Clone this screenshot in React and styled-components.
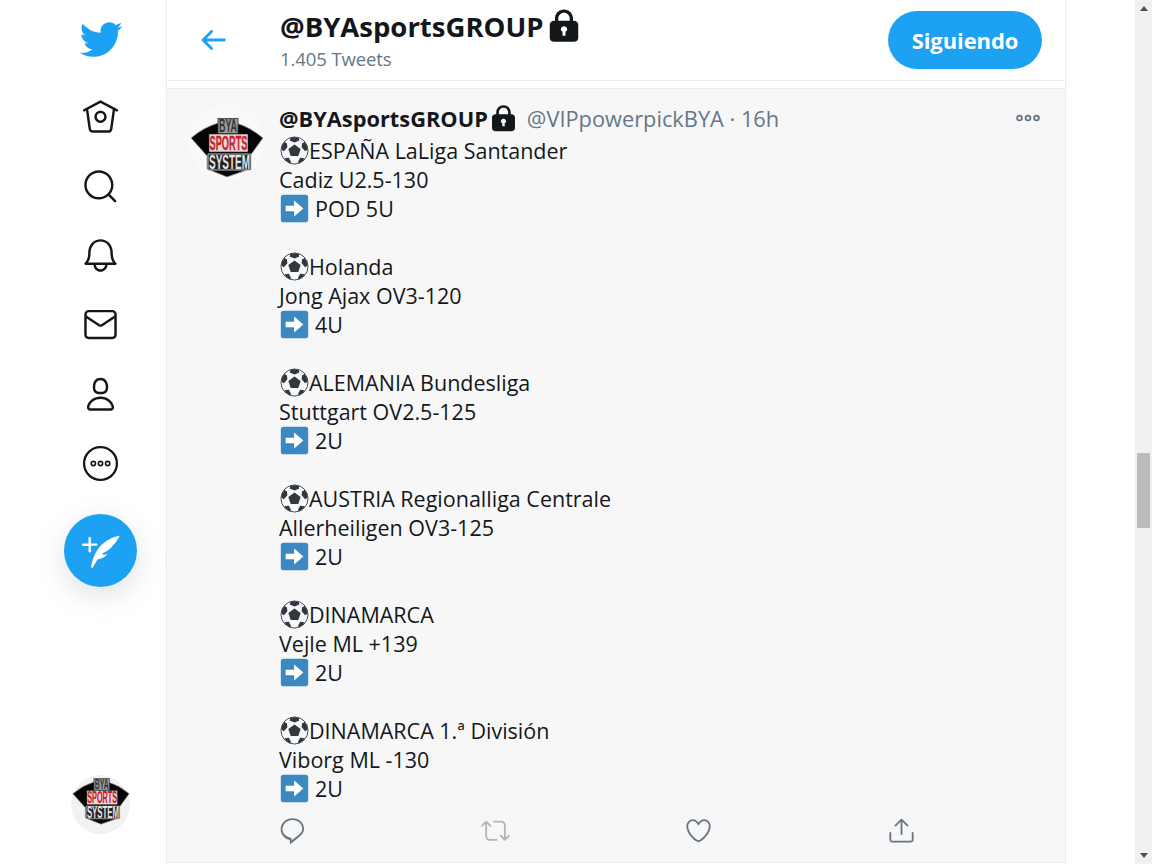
import React from "react";
import styled, { createGlobalStyle } from "styled-components";

const Global = createGlobalStyle`
  html, body { margin: 0; height: 100%; overflow: hidden; background: #fff; }
  body { font-family: "Open Sans", "Liberation Sans", sans-serif; color: #14171a; }
  #root { height: 100%; }
`;

const Page = styled.div`
  display: flex;
  width: 1152px;
  height: 864px;
  overflow: hidden;
`;
const Sidebar = styled.nav`
  width: 166px;
  height: 864px;
  flex: none;
  display: flex;
  flex-direction: column;
  align-items: center;
  padding: 0 0 0 35px;
  box-sizing: border-box;
`;
const Logo = styled.div`
  height: 82px;
  display: flex;
  align-items: flex-start;
  padding-top: 17px;
  box-sizing: border-box;
  color: #1da1f2;
`;
const NavItem = styled.div`
  height: 69.4px;
  flex: none;
  display: flex;
  align-items: center;
  justify-content: center;
  color: #14171a;
`;
const Fab = styled.div`
  width: 73px;
  height: 73px;
  border-radius: 50%;
  margin-top: 16px;
  background: #1da1f2;
  color: #fff;
  display: flex;
  align-items: center;
  justify-content: center;
  box-shadow: 0 8px 28px rgba(101, 119, 134, 0.22);
`;
const SideAvatar = styled.div`
  margin-top: auto;
  margin-bottom: 30px;
  width: 59px;
  height: 59px;
  border-radius: 50%;
  background: #f2f2f3;
  display: flex;
  align-items: flex-start;
  justify-content: center;
  padding-top: 3px;
  box-sizing: border-box;
`;
const Main = styled.main`
  width: 900px;
  flex: none;
  height: 864px;
  box-sizing: border-box;
  border-left: 1px solid #e6ecf0;
  border-right: 1px solid #e6ecf0;
  display: flex;
  flex-direction: column;
`;
const Header = styled.header`
  height: 81px;
  flex: none;
  box-sizing: border-box;
  border-bottom: 1px solid #e6ecf0;
  display: flex;
  align-items: center;
  padding: 0 23px 0 29px;
`;
const Back = styled.div`
  width: 84px;
  flex: none;
  color: #1da1f2;
  display: flex;
  margin-top: -1px;
`;
const TitleBlock = styled.div`
  flex: 1;
  display: flex;
  flex-direction: column;
`;
const TitleRow = styled.div`
  display: flex;
  align-items: center;
  height: 40px;
  margin-top: -2px;
`;
const Title = styled.div`
  font-size: 27.5px;
  font-weight: 700;
  line-height: 40px;
  padding-top: 2px;
  margin-right: 3px;
`;
const Count = styled.div`
  font-size: 18.5px;
  line-height: 26px;
  color: #657786;
  letter-spacing: -0.1px;
`;
const FollowButton = styled.button`
  width: 154px;
  height: 58px;
  border: 0;
  border-radius: 29px;
  background: #1da1f2;
  color: #fff;
  font-family: inherit;
  font-size: 22px;
  font-weight: 700;
  letter-spacing: -0.1px;
  padding: 0;
`;
const Lock = styled.svg`
  display: block;
  flex: none;
  fill: #14171a;
`;
const Gap = styled.div`
  height: 7px;
  flex: none;
  border-bottom: 1px solid #e6ecf0;
`;
const Tweet = styled.article`
  height: 774px;
  flex: none;
  box-sizing: border-box;
  background: #f7f7f8;
  border-bottom: 1px solid #e6ecf0;
  display: flex;
  padding: 15px 25px 0 22px;
`;
const TweetAvatar = styled.div`
  width: 75px;
  height: 75px;
  flex: none;
  border-radius: 50%;
  background: #f9f9f9;
  margin: 1px 15px 0 0;
  display: flex;
  align-items: flex-start;
  justify-content: center;
  padding-top: 13px;
  box-sizing: border-box;
`;
const TweetBody = styled.div`
  flex: 1;
  display: flex;
  flex-direction: column;
`;
const NameRow = styled.div`
  display: flex;
  align-items: center;
  height: 29px;
`;
const Name = styled.span`
  font-size: 21.8px;
  font-weight: 700;
  margin-right: 1px;
`;
const Handle = styled.span`
  font-size: 21.8px;
  color: #657786;
  margin-left: 9px;
  flex: 1;
`;
const Dots = styled.svg`
  display: block;
  color: #657786;
  margin-top: -2px;
`;
const Lines = styled.div`
  font-size: 21.5px;
  line-height: 29px;
  margin-top: 3px;
`;
const Line = styled.div`
  height: 29px;
  display: flex;
  align-items: center;
  white-space: pre;
`;
const Emoji = styled.svg`
  display: block;
  flex: none;
  width: 29px;
  height: 29px;
  margin: 0 ${(p) => p.$gap || 0}px 0 1px;
`;
const Actions = styled.div`
  display: flex;
  justify-content: space-between;
  margin: 13px 0 0 -1px;
  width: 638px;
`;
const Action = styled.div`
  width: 29px;
  height: 29px;
  display: flex;
  opacity: ${(p) => (p.$off ? 0.5 : 1)};
  color: #657786;
`;
const ScrollTrack = styled.aside`
  width: 17px;
  margin-left: 69px;
  height: 864px;
  flex: none;
  background: #f1f1f1;
  display: flex;
  flex-direction: column;
  align-items: center;
`;
const ArrowUp = styled.div`
  width: 0;
  height: 0;
  margin-top: 6px;
  border-left: 4px solid transparent;
  border-right: 4px solid transparent;
  border-bottom: 5px solid #505050;
`;
const Thumb = styled.div`
  width: 13px;
  height: 75px;
  margin-top: 442px;
  background: #bcbcbc;
`;
const ArrowDown = styled.div`
  width: 0;
  height: 0;
  margin-top: auto;
  margin-bottom: 6px;
  border-left: 4px solid transparent;
  border-right: 4px solid transparent;
  border-top: 5px solid #505050;
`;

const Ico = ({ size = 34, children, vb = "0 0 24 24" }) => (
  <svg width={size} height={size} viewBox={vb} fill="currentColor" style={{ display: "block" }}>
    {children}
  </svg>
);

const LockIcon = ({ size }) => (
  <Lock width={size} height={size} viewBox="0 0 24 24">
    <path d="M18.5 8.5H18V6.9C18 3.6 15.3 1 12 1S6 3.6 6 6.9v1.6h-.5C3.6 8.5 2.5 9.7 2.5 11.2v8.6c0 1.6 1.1 2.7 3 2.7h13c1.9 0 3-1.1 3-2.700v-8.600c0-1.500-1.100-2.700-3-2.700zM13 15.900V18.500h-2v-2.600c-.7-.3-1.100-1-1.100-1.700 0-1.100.9-2 2.100-2s2.100.9 2.100 2c0 .7-.4 1.400-1.100 1.700zM15.800 8.500H8.200V6.900C8.200 4.800 9.900 3.100 12 3.100s3.800 1.700 3.800 3.800v1.600z" />
  </Lock>
);

const Ball = () => (
  <Emoji viewBox="0 0 36 36">
    <circle cx="18" cy="18" r="16.800" fill="#f5f8fa" stroke="#41474d" strokeWidth="1.200" />
    <path d="M18 10.500l7.600 5.500-2.900 8.900h-9.400l-2.900-8.900z" fill="#31373d" />
    <path d="M13 2.200Q18 1 23 2.200L24 5.500l-6 2.500-6-2.500zM1.800 17q.2-5.500 3.500-9.500L8.500 9l.7 5L4.800 19zM34.200 17q-.2-5.500-3.500-9.500L27.500 9l-.7 5 4.400 5zM5.500 27.500l5.500-.5 3 5.900-2.500.5Q7.500 32 5.500 27.500zM30.500 27.500l-5.500-.5-3 5.900 2.500.5q4-1.400 6-5.900z" fill="#31373d" />
  </Emoji>
);

const ArrowBox = ({ gap }) => (
  <Emoji viewBox="0 0 36 36" $gap={gap}>
    <rect x="1" y="1" width="34" height="34" rx="3.500" fill="#3b88c3" />
    <path d="M7 14.500h10.500V8L29 18 17.500 28v-6.500H7z" fill="#fff" />
  </Emoji>
);

const BadgeSvg = styled.svg`
  display: block;
  overflow: visible;
`;

const Badge = ({ width }) => (
  <BadgeSvg width={width} height={(width * 60) / 74} viewBox="0 0 74 60">
    <path d="M1 20 Q14 9 28 5 L46 5 Q60 9 73 20 L60 38 L60 51 L37 59 L17 51 L17 38 Z" fill="#050505" stroke="#a5a5a5" strokeWidth="0.8" />
    <rect x="28" y="0.500" width="20" height="15" fill="#9c9c9c" stroke="#333" strokeWidth="0.8" />
    <text x="38" y="14" textAnchor="middle" fontFamily="Liberation Sans" fontWeight="700" fontSize="18" fill="#333" textLength="18" lengthAdjust="spacingAndGlyphs">BYA</text>
    <rect x="19" y="16" width="39" height="18" fill="#e8d8d8" stroke="#222" strokeWidth="0.6" />
    <text x="38.500" y="32" textAnchor="middle" fontFamily="Liberation Sans" fontWeight="700" fontSize="21" fill="#c8222c" stroke="#c8222c" strokeWidth="0.3" textLength="38" lengthAdjust="spacingAndGlyphs">SPORTS</text>
    <path d="M18 36 H61 V52 H18 Z" fill="#222" stroke="#c4c4c4" strokeWidth="1" />
    <text x="39.500" y="51" textAnchor="middle" fontFamily="Liberation Sans" fontWeight="700" fontSize="20" fill="#e6e6e6" textLength="41" lengthAdjust="spacingAndGlyphs">SYSTEM</text>
  </BadgeSvg>
);

const groups = [
  ["ESPAÑA LaLiga Santander", "Cadiz U2.5-130", "POD 5U"],
  ["Holanda", "Jong Ajax OV3-120", "4U"],
  ["ALEMANIA Bundesliga", "Stuttgart OV2.5-125", "2U"],
  ["AUSTRIA Regionalliga Centrale", "Allerheiligen OV3-125", "2U"],
  ["DINAMARCA", "Vejle ML +139", "2U"],
  ["DINAMARCA 1.ª División", "Viborg ML -130", "2U"],
];

export default function App() {
  return (
    <Page>
      <Global />
      <Sidebar>
        <Logo>
          <Ico size={45}>
            <path d="M23.643 4.937c-.835.37-1.732.62-2.675.724.962-.576 1.7-1.49 2.048-2.578-.9.534-1.897.922-2.958 1.13-.85-.904-2.06-1.47-3.4-1.47-2.572 0-4.658 2.086-4.658 4.66 0 .364.042.718.12 1.06-3.873-.195-7.304-2.05-9.602-4.868-.4.69-.63 1.49-.63 2.342 0 1.616.823 3.043 2.072 3.878-.764-.025-1.482-.234-2.11-.583v.06c0 2.257 1.605 4.14 3.737 4.568-.392.106-.803.162-1.227.162-.3 0-.593-.028-.877-.082.593 1.85 2.313 3.198 4.352 3.234-1.595 1.25-3.604 1.995-5.786 1.995-.376 0-.747-.022-1.112-.065 2.062 1.323 4.51 2.093 7.14 2.093 8.57 0 13.255-7.098 13.255-13.254 0-.2-.005-.402-.014-.602.91-.658 1.7-1.477 2.323-2.41z" />
          </Ico>
        </Logo>
        <NavItem>
          <Ico size={39}>
            <path d="M22.46 7.57L12.357 2.115c-.223-.12-.49-.12-.713 0L1.543 7.57c-.364.197-.5.652-.303 1.017.135.25.394.393.66.393.12 0 .243-.03.356-.09l.815-.44L4.7 19.963c.214 1.215 1.308 2.062 2.658 2.062h9.282c1.352 0 2.445-.848 2.663-2.087l1.626-11.49.818.442c.364.193.82.06 1.017-.304.196-.363.06-.818-.304-1.016zm-4.638 12.133c-.107.606-.703.822-1.18.822H7.36c-.48 0-1.075-.216-1.178-.798L4.48 7.69 12 3.628l7.522 4.06-1.7 12.015z" />
            <path d="M8.22 12.184c0 2.084 1.695 3.78 3.78 3.78s3.78-1.696 3.78-3.78-1.695-3.78-3.78-3.78-3.78 1.696-3.78 3.78zm6.06 0c0 1.258-1.022 2.28-2.28 2.28s-2.28-1.022-2.28-2.28 1.022-2.28 2.28-2.28 2.28 1.022 2.28 2.28z" />
          </Ico>
        </NavItem>
        <NavItem>
          <Ico size={39}>
            <path d="M21.53 20.47l-3.66-3.66C19.195 15.24 20 13.214 20 11c0-4.97-4.03-9-9-9s-9 4.03-9 9 4.03 9 9 9c2.215 0 4.24-.804 5.808-2.13l3.66 3.66c.147.146.34.22.53.22s.385-.073.53-.22c.295-.293.295-.767.002-1.06zM3.5 11c0-4.135 3.365-7.5 7.5-7.5s7.5 3.365 7.5 7.5-3.365 7.5-7.5 7.5-7.5-3.365-7.5-7.5z" />
          </Ico>
        </NavItem>
        <NavItem>
          <Ico size={39}>
            <path d="M21.697 16.468c-.02-.016-2.14-1.64-2.103-6.03.02-2.532-.812-4.782-2.347-6.335C15.872 2.71 14.01 1.94 12.005 1.93h-.013c-2.004.01-3.866.78-5.242 2.174-1.534 1.553-2.368 3.802-2.346 6.334.037 4.33-2.02 5.967-2.102 6.03-.26.193-.366.53-.265.838.102.308.39.515.712.515h4.92c.102 2.31 1.997 4.16 4.33 4.16s4.226-1.85 4.327-4.16h4.922c.322 0 .61-.206.71-.514.103-.307-.003-.645-.263-.838zM12 20.478c-1.505 0-2.73-1.177-2.828-2.658h5.656c-.1 1.48-1.323 2.66-2.828 2.66zM4.38 16.32c.74-1.132 1.548-3.028 1.524-5.896-.018-2.16.644-3.982 1.913-5.267C8.91 4.05 10.397 3.437 12 3.43c1.603.008 3.087.62 4.18 1.728 1.27 1.285 1.933 3.106 1.915 5.267-.024 2.868.785 4.765 1.525 5.896H4.38z" />
          </Ico>
        </NavItem>
        <NavItem>
          <Ico size={39}>
            <path d="M19.25 3.018H4.75C3.233 3.018 2 4.252 2 5.77v12.495c0 1.518 1.233 2.752 2.75 2.752h14.5c1.517 0 2.75-1.234 2.75-2.752V5.77c0-1.518-1.233-2.752-2.75-2.752zm-14.5 1.5h14.5c.69 0 1.25.56 1.25 1.25v.714l-8.05 5.367c-.273.18-.626.182-.9-.002L3.5 6.482v-.714c0-.69.56-1.25 1.25-1.25zm14.5 14.998H4.75c-.69 0-1.25-.56-1.25-1.25V8.24l7.24 4.83c.383.256.822.384 1.26.384.44 0 .877-.128 1.26-.383l7.24-4.83v10.022c0 .69-.56 1.25-1.25 1.25z" />
          </Ico>
        </NavItem>
        <NavItem>
          <Ico size={39}>
            <path d="M12 11.816c1.355 0 2.872-.15 3.84-1.256.814-.93 1.078-2.368.806-4.392-.38-2.825-2.117-4.512-4.646-4.512S7.734 3.343 7.354 6.168c-.272 2.024-.008 3.462.806 4.392.968 1.106 2.485 1.256 3.84 1.256zM8.84 6.368c.162-1.2.787-3.212 3.16-3.212s2.998 2.013 3.16 3.212c.207 1.55.057 2.627-.45 3.205-.455.52-1.266.743-2.71.743s-2.255-.223-2.71-.743c-.507-.578-.657-1.656-.45-3.205zm11.44 12.868c-.877-3.526-4.282-5.99-8.28-5.99s-7.403 2.464-8.28 5.99c-.172.692-.028 1.4.395 1.94.408.52 1.04.82 1.733.82h12.304c.693 0 1.325-.3 1.733-.82.424-.54.567-1.247.394-1.94zm-1.576 1.016c-.126.16-.316.246-.552.246H5.848c-.235 0-.426-.085-.552-.246-.137-.174-.18-.412-.12-.654.71-2.855 3.517-4.85 6.824-4.85s6.114 1.994 6.824 4.85c.06.242.017.48-.12.654z" />
          </Ico>
        </NavItem>
        <NavItem>
          <Ico size={39}>
            <circle cx="12" cy="12" r="10.100" fill="none" stroke="currentColor" strokeWidth="1.400" />
            <circle cx="7.600" cy="12" r="1.300" fill="none" stroke="currentColor" strokeWidth="1" />
            <circle cx="12" cy="12" r="1.300" fill="none" stroke="currentColor" strokeWidth="1" />
            <circle cx="16.400" cy="12" r="1.300" fill="none" stroke="currentColor" strokeWidth="1" />
          </Ico>
        </NavItem>
        <Fab>
          <Ico size={38}>
            <path d="M8.800 7.200H5.600V3.900c0-.4-.3-.8-.8-.8s-.7.4-.7.8v3.300H.8c-.4 0-.8.3-.8.8s.3.8.8.8h3.300v3.300c0 .4.3.8.8.8s.8-.3.8-.8V8.700H9c.4 0 .8-.3.8-.8s-.5-.7-1-.7z" />
            <path d="M23.800 2.300c-.1 0-9.200 1.200-14.400 9.500C6.800 16 6 20 5.800 22c-.1.7.7.8 1.100.2l2.900-4.900s4.200-.3 6.300-3.500c-1.300.7-3.100.9-3.200 0-.1-.5 3.300-1.300 6.200-4.800 1.100-1.300 3.500-3.800 4.700-6.700z" />
          </Ico>
        </Fab>
        <SideAvatar>
          <Badge width={58} />
        </SideAvatar>
      </Sidebar>
      <Main>
        <Header>
          <Back>
            <Ico size={34}>
              <path d="M20 11H7.414l4.293-4.293c.39-.39.39-1.023 0-1.414s-1.023-.39-1.414 0l-6 6c-.39.39-.39 1.023 0 1.414l6 6c.195.195.45.293.707.293s.512-.098.707-.293c.39-.39.39-1.023 0-1.414L7.414 13H20c.553 0 1-.447 1-1s-.447-1-1-1z" />
            </Ico>
          </Back>
          <TitleBlock>
            <TitleRow>
              <Title>@BYAsportsGROUP</Title>
              <LockIcon size={36} />
            </TitleRow>
            <Count>1.405 Tweets</Count>
          </TitleBlock>
          <FollowButton>Siguiendo</FollowButton>
        </Header>
        <Gap />
        <Tweet>
          <TweetAvatar>
            <Badge width={74} />
          </TweetAvatar>
          <TweetBody>
            <NameRow>
              <Name>@BYAsportsGROUP</Name>
              <LockIcon size={29} />
              <Handle>@VIPpowerpickBYA · 16h</Handle>
              <Dots width="24" height="10" viewBox="0 0 24 10" fill="none" stroke="currentColor" strokeWidth="1.800">
                <circle cx="3.500" cy="5" r="2.400" />
                <circle cx="12" cy="5" r="2.400" />
                <circle cx="20.500" cy="5" r="2.400" />
              </Dots>
            </NameRow>
            <Lines>
              {groups.map((g, i) => (
                <React.Fragment key={i}>
                  <Line><Ball />{g[0]}</Line>
                  <Line>{g[1]}</Line>
                  <Line><ArrowBox gap={6} />{g[2]}</Line>
                  {i < groups.length - 1 && <Line />}
                </React.Fragment>
              ))}
            </Lines>
            <Actions>
              <Action>
                <Ico size={29}>
                  <path d="M12 1.800c-5.300 0-9.800 4-9.800 9.200 0 4.500 3.300 8 7.600 8.900v2.600c0 .4.500.7.900.4 1.300-1 4.700-3.600 6.700-5.500 2.600-2.100 4.200-4.300 4.200-6.700 0-5-4.300-8.900-9.600-8.900zm4.300 14.300c-1.300 1.200-3.600 3-5 4.200v-1.600c0-.4-.3-.7-.7-.8-3.900-.6-6.900-3.500-6.900-6.900 0-4.300 3.800-7.700 8.300-7.700s8.100 3.300 8.100 7.400c0 1.900-1.400 3.900-3.800 5.400z" />
                </Ico>
              </Action>
              <Action $off>
                <Ico size={29}>
                  <path d="M23.770 15.670c-.292-.293-.767-.293-1.060 0l-2.220 2.220V7.650c0-2.068-1.683-3.750-3.750-3.750h-5.850c-.414 0-.750.336-.750.750s.336.750.750.750h5.850c1.240 0 2.250 1.010 2.250 2.250v10.240l-2.220-2.220c-.293-.293-.768-.293-1.060 0s-.294.768 0 1.060l3.500 3.500c.145.147.337.220.530.220s.383-.072.530-.220l3.500-3.500c.294-.292.294-.767 0-1.060zm-10.660 3.280H7.260c-1.240 0-2.250-1.010-2.250-2.250V6.460l2.220 2.220c.148.147.340.220.532.220s.384-.073.530-.220c.293-.293.293-.768 0-1.060l-3.500-3.500c-.293-.294-.768-.294-1.060 0l-3.500 3.500c-.294.292-.294.767 0 1.060s.767.293 1.060 0l2.220-2.220V16.700c0 2.068 1.683 3.750 3.750 3.750h5.850c.414 0 .750-.336.750-.750s-.337-.750-.750-.750z" />
                </Ico>
              </Action>
              <Action>
                <Ico size={29}>
                  <path d="M12 21.638h-.014C9.403 21.590 1.950 14.856 1.950 8.478c0-3.064 2.525-5.754 5.403-5.754 2.290 0 3.830 1.580 4.646 2.730.814-1.148 2.354-2.730 4.645-2.730 2.880 0 5.404 2.690 5.404 5.755 0 6.376-7.454 13.110-10.037 13.157H12zM7.354 4.225c-2.080 0-3.903 1.988-3.903 4.255 0 5.740 7.034 11.596 8.550 11.658 1.518-.062 8.550-5.917 8.550-11.658 0-2.267-1.823-4.255-3.903-4.255-2.528 0-3.940 2.936-3.952 2.965-.230.562-1.156.562-1.387 0-.014-.030-1.425-2.965-3.954-2.965z" />
                </Ico>
              </Action>
              <Action>
                <Ico size={29}>
                  <path d="M17.530 7.470l-5-5c-.293-.293-.768-.293-1.060 0l-5 5c-.294.293-.294.768 0 1.060s.767.294 1.060 0l3.720-3.720V15c0 .414.336.750.750.750s.750-.336.750-.750V4.810l3.720 3.720c.146.147.338.220.530.220s.384-.072.530-.220c.293-.293.293-.767 0-1.060z" />
                  <path d="M19.708 21.944H4.292C3.028 21.944 2 20.916 2 19.652V14c0-.414.336-.750.750-.750s.750.336.750.750v5.652c0 .437.355.792.792.792h15.416c.437 0 .792-.355.792-.792V14c0-.414.336-.750.750-.750s.750.336.750.750v5.652c0 1.264-1.028 2.292-2.292 2.292z" />
                </Ico>
              </Action>
            </Actions>
          </TweetBody>
        </Tweet>
      </Main>
      <ScrollTrack>
        <ArrowUp />
        <Thumb />
        <ArrowDown />
      </ScrollTrack>
    </Page>
  );
}
